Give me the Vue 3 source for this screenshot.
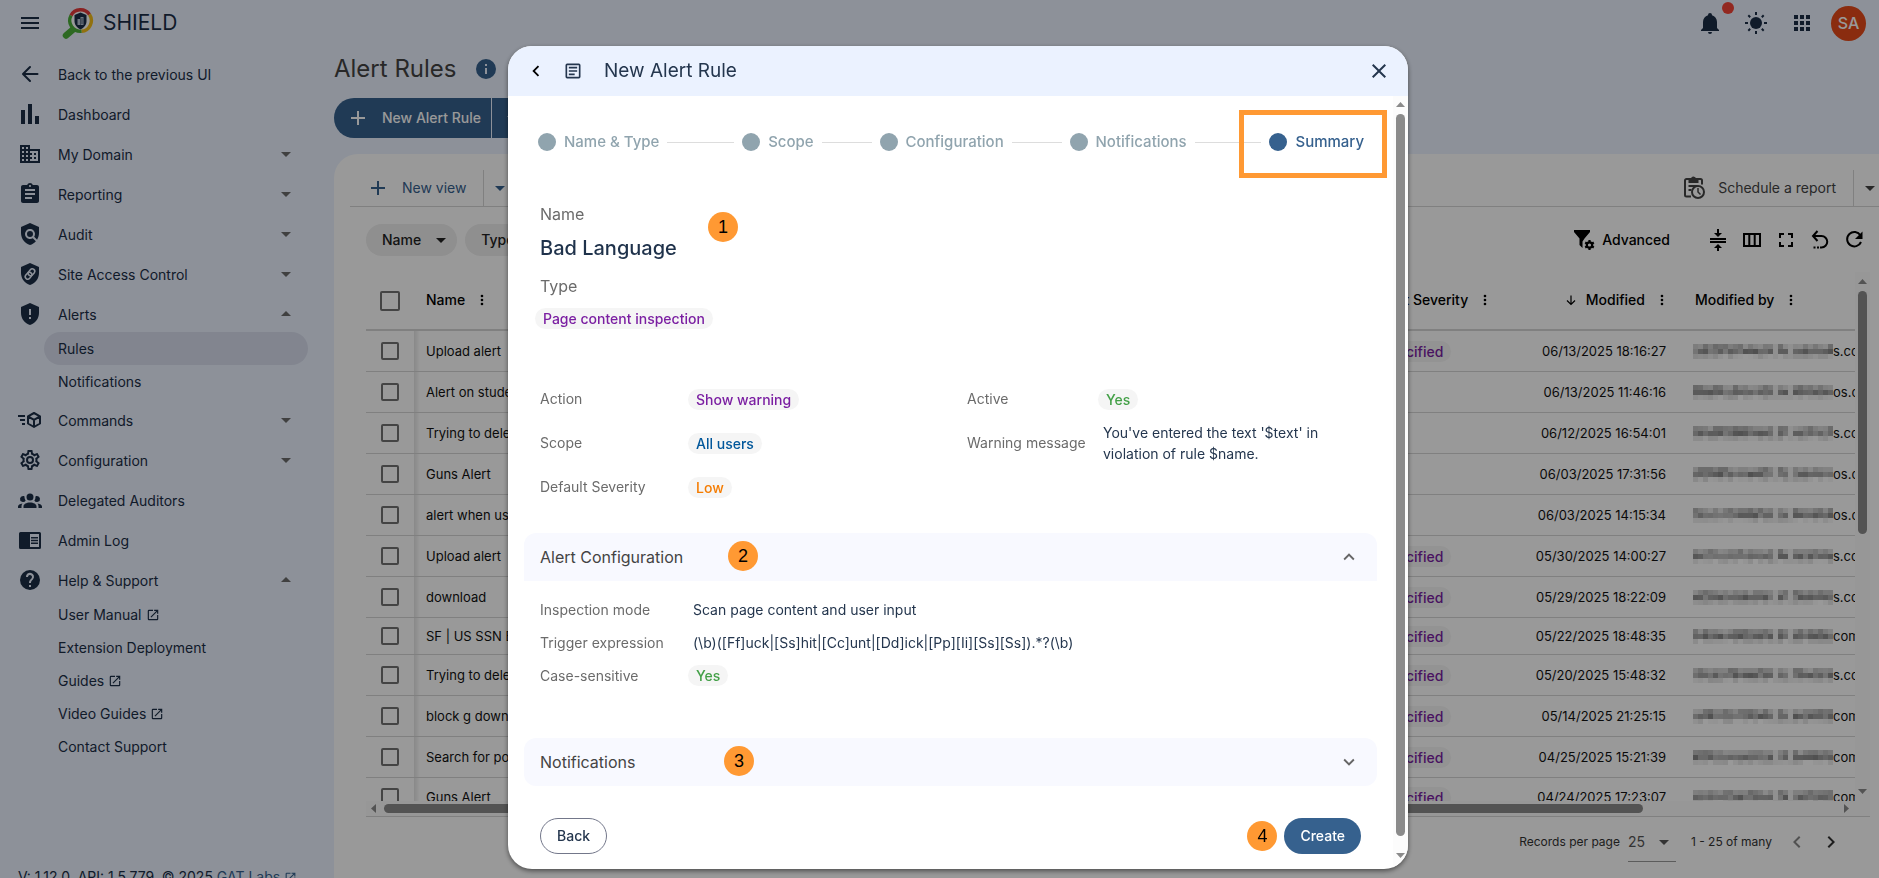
<script setup>
import { h } from 'vue'

const paths = {
  menu: 'M3 18h18v-2H3v2zm0-5h18v-2H3v2zm0-7v2h18V6H3z',
  chart: 'M3 8h4v14H3zM10 2h4v20h-4zM17 14h4v8h-4z',
  domain: 'M12 7V3H2v18h20V7H12zM6 19H4v-2h2v2zm0-4H4v-2h2v2zm0-4H4V9h2v2zm0-4H4V5h2v2zm4 12H8v-2h2v2zm0-4H8v-2h2v2zm0-4H8V9h2v2zm0-4H8V5h2v2zm10 12h-8v-2h2v-2h-2v-2h2v-2h-2V9h8v10zm-2-8h-2v2h2v-2zm0 4h-2v2h2v-2z',
  assignment: 'M19 3h-4.18C14.4 1.84 13.3 1 12 1c-1.3 0-2.4.84-2.82 2H5c-1.1 0-2 .9-2 2v14c0 1.1.9 2 2 2h14c1.1 0 2-.9 2-2V5c0-1.1-.9-2-2-2zm-7 0c.55 0 1 .45 1 1s-.45 1-1 1-1-.45-1-1 .45-1 1-1zm2 14H7v-2h7v2zm3-4H7v-2h10v2zm0-4H7V7h10v2z',
  policy: 'M21 5l-9-4-9 4v6c0 5.55 3.84 10.74 9 12 2.3-.56 4.33-1.9 5.88-3.71l-3.12-3.12c-1.94 1.29-4.58 1.07-6.29-.64-1.95-1.95-1.95-5.12 0-7.07 1.95-1.95 5.12-1.95 7.07 0 1.71 1.71 1.92 4.35.64 6.29l2.9 2.9C20.29 15.69 21 13.38 21 11V5zM12 9a3 3 0 1 0 0 6 3 3 0 0 0 0-6z',
  shieldAlert: 'M12 1L3 5v6c0 5.55 3.84 10.74 9 12 5.16-1.26 9-6.45 9-12V5l-9-4zm-1 6h2v6h-2V7zm0 8h2v2h-2v-2z',
  shield: 'M12 1L3 5v6c0 5.55 3.84 10.74 9 12 5.16-1.26 9-6.45 9-12V5l-9-4z',
  cog: 'M12 8a4 4 0 1 1 0 8 4 4 0 0 1 0-8m0 2a2 2 0 1 0 0 4 2 2 0 0 0 0-4m-2 12c-.25 0-.46-.18-.5-.42l-.37-2.65c-.63-.25-1.17-.59-1.69-.99l-2.49 1.01c-.22.08-.49 0-.61-.22l-2-3.46c-.13-.22-.07-.49.12-.64l2.11-1.66L4.5 12l.07-1-2.11-1.63c-.19-.15-.25-.42-.12-.64l2-3.46c.12-.22.39-.31.61-.22l2.49 1c.52-.39 1.06-.73 1.69-.98l.37-2.65c.04-.24.25-.42.5-.42h4c.25 0 .46.18.5.42l.37 2.65c.63.25 1.17.59 1.69.98l2.49-1c.22-.09.49 0 .61.22l2 3.46c.13.22.07.49-.12.64L19.43 11l.07 1-.07 1 2.11 1.63c.19.15.25.42.12.64l-2 3.46c-.12.22-.39.31-.61.22l-2.49-1c-.52.39-1.06.73-1.69.98l-.37 2.65c-.04.24-.25.42-.5.42h-4m1.25-18l-.37 2.61c-1.2.25-2.26.89-3.03 1.78L5.44 7.35l-.75 1.3L6.8 10.2a5.55 5.55 0 0 0 0 3.6l-2.12 1.56.75 1.3 2.43-1.04c.77.88 1.82 1.52 3.01 1.76l.37 2.62h1.52l.37-2.61c1.19-.25 2.24-.89 3.01-1.77l2.43 1.04.75-1.3-2.12-1.55c.4-1.17.4-2.44 0-3.61l2.11-1.55-.75-1.3-2.41 1.04a5.42 5.42 0 0 0-3.03-1.77L12.75 4h-1.5z',
  groups: 'M12 5.5A3.5 3.5 0 1 1 12 12.500 3.500 3.500 0 0 1 12 5.500M5 8c.56 0 1.080.15 1.530.420-.150 1.430.270 2.850 1.130 3.960A3 3 0 1 1 5 8m14 0a3 3 0 1 1-2.660 4.380 5.720 5.720 0 0 0 1.130-3.960c.450-.270.970-.420 1.530-.420M5.500 18.250c0-2.070 2.910-3.750 6.500-3.750s6.500 1.680 6.500 3.750V20h-13v-1.750M0 20v-1.500c0-1.390 1.890-2.560 4.450-2.900-.590.680-.950 1.620-.950 2.650V20H0m24 0h-3.500v-1.750c0-1.030-.360-1.970-.950-2.650 2.560.340 4.450 1.510 4.450 2.900V20z',
  reader: 'M2.500 4A1.500 1.500 0 0 0 1 5.500v14A1.500 1.500 0 0 0 2.500 21h19a1.500 1.500 0 0 0 1.500-1.500v-14A1.500 1.500 0 0 0 21.500 4h-19zM12 6h9v13h-9V6zm1 3h7v1.500h-7V9zm0 2.700h7v1.500h-7v-1.500zm0 2.700h7v1.500h-7v-1.500z',
  help: 'M12 2a10 10 0 1 0 0 20 10 10 0 0 0 0-20zm1 17h-2v-2h2v2zm2.070-7.750l-.900.920C13.450 12.900 13 13.500 13 15h-2v-.500c0-1.100.450-2.100 1.170-2.830l1.240-1.260A2 2 0 1 0 10 9H8a4 4 0 1 1 7.070 2.250z',
  open: 'M14 3v2h3.590L7.760 14.830l1.410 1.410L19 6.410V10h2V3m-2 16H5V5h7V3H5a2 2 0 0 0-2 2v14a2 2 0 0 0 2 2h14a2 2 0 0 0 2-2v-7h-2v7z',
  bell: 'M21 19v1H3v-1l2-2v-6c0-3.100 2.030-5.830 5-6.710V4a2 2 0 1 1 4 0v.290c2.970.880 5 3.610 5 6.710v6l2 2m-7 2a2 2 0 1 1-4 0',
  apps: 'M4 4h4v4H4zM10 4h4v4h-4zM16 4h4v4h-4zM4 10h4v4H4zM10 10h4v4h-4zM16 10h4v4h-4zM4 16h4v4H4zM10 16h4v4h-4zM16 16h4v4h-4z',
  down: 'M7 10l5 5 5-5z',
  up: 'M7 14l5-5 5 5z',
  plus: 'M19 13h-6v6h-2v-6H5v-2h6V5h2v6h6v2z',
  info: 'M12 2a10 10 0 1 0 0 20 10 10 0 0 0 0-20zm1 15h-2v-6h2v6zm0-8h-2V7h2v2z',
  dots: 'M12 8a2 2 0 1 0 0-4 2 2 0 0 0 0 4zm0 2a2 2 0 1 0 0 4 2 2 0 0 0 0-4zm0 6a2 2 0 1 0 0 4 2 2 0 0 0 0-4z',
  compress: 'M4 10h16v2H4zM4 13h16v2H4zM11 1h2v4h3l-4 4-4-4h3zM12 16l4 4h-3v3h-2v-3H8z',
  columns: 'M3 5v14h18V5H3zm5.300 12H5V7h3.300v10zm5.400 0h-3.400V7h3.400v10zm5.300 0h-3.300V7H19v10z',
  fullscreen: 'M5 5h5v2H7v3H5V5zm9 0h5v5h-2V7h-3V5zM5 14h2v3h3v2H5v-5zm12 0h2v5h-5v-2h3v-3z',
  chevLeft: 'M15.410 7.410L14 6l-6 6 6 6 1.410-1.410L10.830 12z',
  chevRight: 'M10 6L8.590 7.410 13.170 12l-4.580 4.590L10 18l6-6z',
  expandMore: 'M16.590 8.590L12 13.170 7.410 8.590 6 10l6 6 6-6z',
  expandLess: 'M12 8l-6 6 1.410 1.410L12 10.830l4.590 4.580L18 14z',
  article: 'M5 3a2 2 0 0 0-2 2v14a2 2 0 0 0 2 2h14a2 2 0 0 0 2-2V5a2 2 0 0 0-2-2H5zm0 2h14v14H5V5zm2 2v2h10V7H7zm0 4v2h10v-2H7zm0 4v2h7v-2H7z',
  close: 'M19 6.410L17.590 5 12 10.590 6.410 5 5 6.410 10.590 12 5 17.590 6.410 19 12 13.410 17.590 19 19 17.590 13.410 12z'
}

const Icon = (props) =>
  h('svg', { viewBox: '0 0 24 24', width: props.size || 24, height: props.size || 24, 'aria-hidden': 'true' }, [
    h('path', { d: paths[props.name], fill: 'currentColor', 'fill-rule': 'evenodd' })
  ])
Icon.props = ['name', 'size']

const nav = [
  { label: 'Back to the previous UI', icon: 'back' },
  { label: 'Dashboard', icon: 'chart' },
  { label: 'My Domain', icon: 'domain', arrow: 'down' },
  { label: 'Reporting', icon: 'assignment', arrow: 'down' },
  { label: 'Audit', icon: 'policy', arrow: 'down' },
  { label: 'Site Access Control', icon: 'link', arrow: 'down' },
  { label: 'Alerts', icon: 'shieldAlert', arrow: 'up', children: [{ label: 'Rules', active: true }, { label: 'Notifications' }] },
  { label: 'Commands', icon: 'commands', arrow: 'down' },
  { label: 'Configuration', icon: 'cog', arrow: 'down' },
  { label: 'Delegated Auditors', icon: 'groups' },
  { label: 'Admin Log', icon: 'reader' },
  {
    label: 'Help & Support', icon: 'help', arrow: 'up',
    children: [
      { label: 'User Manual', ext: true },
      { label: 'Extension Deployment' },
      { label: 'Guides', ext: true },
      { label: 'Video Guides', ext: true },
      { label: 'Contact Support' }
    ]
  }
]

const rows = [
  { name: 'Upload alert', sev: true, date: '06/13/2025 18:16:27', tail: 's.com' },
  { name: 'Alert on student', date: '06/13/2025 11:46:16', tail: 'os.com' },
  { name: 'Trying to delete', date: '06/12/2025 16:54:01', tail: 's.com' },
  { name: 'Guns Alert', date: '06/03/2025 17:31:56', tail: 'os.com' },
  { name: 'alert when user', date: '06/03/2025 14:15:34', tail: 'os.com' },
  { name: 'Upload alert', sev: true, date: '05/30/2025 14:00:27', tail: 's.com' },
  { name: 'download', sev: true, date: '05/29/2025 18:22:09', tail: 's.com' },
  { name: 'SF | US SSN Block', sev: true, date: '05/22/2025 18:48:35', tail: 'com', small: true },
  { name: 'Trying to delete', sev: true, date: '05/20/2025 15:48:32', tail: 's.com' },
  { name: 'block g download', sev: true, date: '05/14/2025 21:25:15', tail: 'com' },
  { name: 'Search for policy', sev: true, date: '04/25/2025 15:21:39', tail: 'com' },
  { name: 'Guns Alert', sev: true, date: '04/24/2025 17:23:07', tail: 'com', last: true }
]

/* Redacted addresses: a 28 x 3 grid of grey cells, darkest in the middle line. */
const mosaic = (seed) => {
  const cells = []
  let s = seed * 7919 + 17
  for (let y = 0; y < 3; y++) {
    for (let x = 0; x < 28; x++) {
      s = (s * 16807) % 2147483647
      const r = (s % 1000) / 1000
      const gap = x === 16 || x === 19
      const o = gap ? 0.06 : [0.1 + r * 0.22, 0.22 + r * 0.26, r * 0.12][y]
      cells.push({ x: x * 5, y: y * 5, o: o.toFixed(2) })
    }
  }
  return cells
}
rows.forEach((r, i) => { r.cells = mosaic(i + 1) })

const steps = [
  { label: 'Name & Type', grow: 67 },
  { label: 'Scope', grow: 50 },
  { label: 'Configuration', grow: 50 },
  { label: 'Notifications', grow: 67 },
  { label: 'Summary', active: true }
]
</script>

<template>
  <div class="app">
    <header class="top">
      <button class="icon-btn" aria-label="Menu"><Icon name="menu" /></button>
      <svg class="logo" viewBox="0 0 32 32" aria-hidden="true">
        <path d="M11 22.500L4 28.500" stroke="#4caf3a" stroke-width="6.500" stroke-linecap="round" />
        <circle cx="18.500" cy="13.500" r="11" fill="#fff" />
        <path d="M9 8.500A10.800 10.800 0 0 1 27.500 7.500" fill="none" stroke="#e5393a" stroke-width="3.400" />
        <path d="M27.500 7.500A10.800 10.800 0 0 1 19.500 24.300" fill="none" stroke="#f2bd1a" stroke-width="3.400" />
        <path d="M19.500 24.300A10.800 10.800 0 0 1 9 8.500" fill="none" stroke="#4caf3a" stroke-width="3.400" />
        <path d="M18.500 5.500l6 2.500v6c0 4-2.500 6.500-6 8.500-3.500-2-6-4.500-6-8.500V8z" fill="#1b2e47" />
        <path d="M15.500 12h2.500v6h-2.500zM18.500 10h3v8h-3z" fill="#b9c4d4" />
        <path d="M19.300 12h1.400M19.300 14h1.400M19.300 16h1.400" stroke="#1b2e47" />
      </svg>
      <span class="brand">SHIELD</span>
      <div class="top-right">
        <button class="icon-btn bell" aria-label="Notifications"><Icon name="bell" /><i class="dot"></i></button>
        <button class="icon-btn" aria-label="Theme">
          <svg viewBox="0 0 24 24" width="24" height="24" aria-hidden="true">
            <circle cx="12" cy="12" r="6" fill="currentColor" />
            <path d="M12 1v3M12 20v3M1 12h3M20 12h3M4.300 4.300l1.900 1.900M17.800 17.800l1.900 1.900M4.300 19.700l1.900-1.900M17.800 6.200l1.900-1.900" stroke="currentColor" stroke-width="2" />
          </svg>
        </button>
        <button class="icon-btn" aria-label="Apps"><Icon name="apps" /></button>
        <button class="avatar">SA</button>
      </div>
    </header>

    <div class="body">
      <aside class="side">
        <nav class="nav">
          <div v-for="item in nav" :key="item.label">
            <a href="#" class="nav-item">
              <svg v-if="item.icon === 'back'" viewBox="0 0 24 24" width="24" height="24" aria-hidden="true">
                <path d="M19.500 12H5.500M12 5l-7 7 7 7" fill="none" stroke="currentColor" stroke-width="2" stroke-linecap="round" stroke-linejoin="round" />
              </svg>
              <svg v-else-if="item.icon === 'link'" viewBox="0 0 24 24" width="24" height="24" aria-hidden="true">
                <path :d="paths.shield" fill="currentColor" />
                <g fill="none" stroke="#ebf2ff" stroke-width="1.500" transform="rotate(-50 12 12)">
                  <rect x="6" y="9.500" width="7.500" height="5" rx="2.500" />
                  <rect x="10.500" y="9.500" width="7.500" height="5" rx="2.500" />
                </g>
              </svg>
              <svg v-else-if="item.icon === 'commands'" viewBox="0 0 24 24" width="24" height="24" aria-hidden="true">
                <path d="M0 8h7M2 12h5M4 16h3" stroke="currentColor" stroke-width="1.800" />
                <path d="M16 5l6 3.300v7.200L16 19l-6-3.500V8.300zM10 8.300l6 3.500 6-3.500M16 11.800V19" fill="none" stroke="currentColor" stroke-width="2" stroke-linejoin="round" />
              </svg>
              <Icon v-else :name="item.icon" />
              <span class="nav-label">{{ item.label }}</span>
              <Icon v-if="item.arrow" class="nav-arrow" :name="item.arrow" />
            </a>
            <a v-for="c in item.children" :key="c.label" href="#" class="sub" :class="{ active: c.active }">
              {{ c.label }}<Icon v-if="c.ext" name="open" :size="14" />
            </a>
          </div>
        </nav>
        <p class="version">V: 1.12.0, API: 1.5.779, © 2025 <a href="#">GAT Labs <Icon name="open" :size="13" /></a></p>
      </aside>

      <main class="main">
        <div class="title-row">
          <h1>Alert Rules</h1>
          <Icon class="blue" name="info" />
        </div>
        <div class="split">
          <button class="split-main"><Icon name="plus" /><span>New Alert Rule</span></button>
          <button class="split-drop" aria-label="More"><Icon name="down" /></button>
        </div>

        <section class="card">
          <div class="views">
            <button class="view-btn blue"><Icon name="plus" /><span>New view</span></button>
            <button class="view-drop blue" aria-label="Views"><Icon name="down" /></button>
            <button class="report">
              <svg viewBox="0 0 24 24" width="24" height="24" aria-hidden="true">
                <path d="M9 20.500H4.500A1.500 1.500 0 0 1 3 19V4.500A1.500 1.500 0 0 1 4.500 3h14A1.500 1.500 0 0 1 20 4.500V8.500M6.500 10h9M6.500 14h3" fill="none" stroke="currentColor" stroke-width="2" />
                <path d="M6.500 3H9a2.500 2.500 0 0 1 5 0h2.500v4h-10z" fill="currentColor" />
                <circle cx="16" cy="16" r="6" fill="none" stroke="currentColor" stroke-width="2" />
                <path d="M16 12v4l2.500 2.500" fill="none" stroke="currentColor" stroke-width="1.500" />
              </svg>
              <span>Schedule a report</span>
            </button>
            <button class="report-drop" aria-label="Report options"><Icon name="down" /></button>
          </div>

          <div class="filters">
            <button class="filter">Name <Icon name="down" /></button>
            <button class="filter">Type <Icon name="down" /></button>
            <div class="tools">
              <button class="adv">
                <svg viewBox="0 0 24 24" width="24" height="24" aria-hidden="true">
                  <path d="M2 2h16v2l-5.500 6.500-2 3V20L7.500 17v-6.500L2 4z" fill="currentColor" />
                  <circle cx="17.500" cy="17" r="2.700" fill="none" stroke="currentColor" stroke-width="2.200" />
                  <path d="M17.500 12v2M17.500 20v2M13.200 14.500l1.700 1M20.100 18.500l1.700 1M13.200 19.500l1.700-1M20.100 15.500l1.700-1" stroke="currentColor" stroke-width="2.200" />
                </svg>
                <span>Advanced</span>
              </button>
              <button class="tool" aria-label="Density"><Icon name="compress" /></button>
              <button class="tool" aria-label="Columns"><Icon name="columns" /></button>
              <button class="tool" aria-label="Fullscreen"><Icon name="fullscreen" /></button>
              <button class="tool" aria-label="Reset">
                <svg viewBox="0 0 24 24" width="24" height="24" aria-hidden="true">
                  <path d="M9.500 3L5 8l4.500 5M5 8h8.500a5.500 5.500 0 0 1 0 11.500H12" fill="none" stroke="currentColor" stroke-width="2" />
                  <path d="M5.500 18.500h2v2h-2zM9 18.500h2v2H9z" fill="currentColor" />
                </svg>
              </button>
              <button class="tool" aria-label="Refresh">
                <svg viewBox="0 0 24 24" width="24" height="24" aria-hidden="true">
                  <path d="M18.500 7.500A7.200 7.200 0 1 0 19 14" fill="none" stroke="currentColor" stroke-width="2" />
                  <path d="M20.500 3.500v7.500H13z" fill="currentColor" />
                </svg>
              </button>
            </div>
          </div>

          <div class="grid-box">
            <div class="grid-main">
              <div class="clip">
                <table>
                  <colgroup><col class="c-check" /><col /><col class="c-sev" /><col class="c-mod" /><col class="c-by" /></colgroup>
                  <thead>
                    <tr>
                      <th class="check"><input type="checkbox" class="big" aria-label="Select all" /></th>
                      <th class="name-cell"><span class="th">Name <Icon name="dots" :size="16" /></span></th>
                      <th class="sev"><span class="th">Default Severity <Icon name="dots" :size="16" /></span></th>
                      <th class="mod-h">
                        <span class="th end">
                          <svg viewBox="0 0 12 12" width="12" height="12" aria-hidden="true"><path d="M6 1.500v9M2 6.500l4 4 4-4" fill="none" stroke="currentColor" stroke-width="1.200" /></svg>
                          Modified <Icon name="dots" :size="16" />
                        </span>
                      </th>
                      <th class="by"><span class="th">Modified by <Icon name="dots" :size="16" /></span></th>
                    </tr>
                  </thead>
                  <tbody>
                    <tr v-for="(r, i) in rows" :key="i" :class="{ small: r.small, last: r.last }">
                      <td class="check"><input type="checkbox" :aria-label="'Select ' + r.name" /></td>
                      <td class="name-cell">{{ r.name }}</td>
                      <td class="sev"><span v-if="r.sev" class="chip purple">Not specified</span></td>
                      <td class="date">{{ r.date }}</td>
                      <td class="by">
                        <span class="mail">
                          <svg viewBox="0 0 140 15" width="140" height="15" aria-hidden="true" shape-rendering="crispEdges">
                            <rect v-for="(c, k) in r.cells" :key="k" :x="c.x" :y="c.y" width="5" height="5" :opacity="c.o" />
                          </svg>{{ r.tail }}
                        </span>
                      </td>
                    </tr>
                  </tbody>
                </table>
              </div>
              <div class="hbar">
                <svg viewBox="0 0 5 9" width="5" height="9" aria-hidden="true"><path d="M5 0v9L0 4.500z" fill="#8b8b8b" /></svg>
                <div class="htrack"><div class="hthumb"></div></div>
                <svg viewBox="0 0 5 9" width="5" height="9" aria-hidden="true"><path d="M0 0v9l5-4.500z" fill="#8b8b8b" /></svg>
              </div>
            </div>
            <div class="vbar">
              <svg viewBox="0 0 9 5" width="9" height="5" aria-hidden="true"><path d="M0 5h9L4.500 0z" fill="#8b8b8b" /></svg>
              <div class="vtrack"><div class="vthumb"></div></div>
              <svg viewBox="0 0 9 5" width="9" height="5" aria-hidden="true"><path d="M0 0h9L4.500 5z" fill="#8b8b8b" /></svg>
            </div>
          </div>

          <footer class="pager">
            <label for="page-size">Records per page</label>
            <span class="size">
              <select id="page-size"><option>25</option></select>
              <Icon name="down" />
            </span>
            <span class="range">1 - 25 of many</span>
            <button class="tool muted" aria-label="Previous page"><Icon name="chevLeft" /></button>
            <button class="tool" aria-label="Next page"><Icon name="chevRight" /></button>
          </footer>
        </section>
      </main>
    </div>

    <div class="overlay">
      <section class="dialog" role="dialog" aria-label="New Alert Rule">
        <header class="d-head">
          <button class="icon-btn black" aria-label="Back"><Icon name="chevLeft" :size="22" /></button>
          <Icon name="article" :size="20" />
          <h2>New Alert Rule</h2>
          <button class="icon-btn close" aria-label="Close"><Icon name="close" /></button>
        </header>
        <div class="d-wrap">
          <div class="d-body">
            <ol class="stepper">
              <template v-for="s in steps" :key="s.label">
                <li class="step" :class="{ current: s.active }"><i></i>{{ s.label }}</li>
                <li v-if="s.grow" class="line" :style="{ flexGrow: s.grow }" aria-hidden="true"></li>
              </template>
            </ol>
            <div class="highlight"></div>
            <b class="badge b1">1</b>

            <div class="intro">
              <div class="cap">Name</div>
              <div class="big-name">Bad Language</div>
              <div class="cap type-cap">Type</div>
              <span class="chip purple pull">Page content inspection</span>
            </div>

            <dl class="facts">
              <dt>Action</dt><dd><span class="chip purple">Show warning</span></dd>
              <dt>Active</dt><dd><span class="chip green">Yes</span></dd>
              <dt>Scope</dt><dd><span class="chip azure">All users</span></dd>
              <dt>Warning message</dt><dd class="plain">You've entered the text '$text' in violation of rule $name.</dd>
              <dt>Default Severity</dt><dd><span class="chip orange">Low</span></dd>
            </dl>

            <button class="panel open">
              <span>Alert Configuration</span><Icon name="expandLess" :size="22" />
              <b class="badge b2">2</b>
            </button>
            <dl class="facts conf">
              <dt>Inspection mode</dt><dd class="plain">Scan page content and user input</dd>
              <dt>Trigger expression</dt><dd class="plain">(\b)([Ff]uck|[Ss]hit|[Cc]unt|[Dd]ick|[Pp][Ii][Ss][Ss]).*?(\b)</dd>
              <dt>Case-sensitive</dt><dd><span class="chip green">Yes</span></dd>
            </dl>
            <button class="panel">
              <span>Notifications</span><Icon name="expandMore" :size="22" />
              <b class="badge b3">3</b>
            </button>

            <div class="actions">
              <button class="btn ghost">Back</button>
              <b class="badge b4">4</b>
              <button class="btn solid">Create</button>
            </div>
          </div>
          <div class="vbar dialog-bar">
            <svg viewBox="0 0 9 5" width="9" height="5" aria-hidden="true"><path d="M0 5h9L4.500 0z" fill="#8b8b8b" /></svg>
            <div class="vtrack"><div class="vthumb"></div></div>
            <svg viewBox="0 0 9 5" width="9" height="5" aria-hidden="true"><path d="M0 0h9L4.500 5z" fill="#8b8b8b" /></svg>
          </div>
        </div>
      </section>
    </div>
  </div>
</template>

<style>
html, body { margin: 0; overflow: hidden; }
</style>

<style scoped>
.app {
  height: 100vh;
  display: flex;
  flex-direction: column;
  overflow: hidden;
  background: #ebf2ff;
  color: #1b2e47;
  font: 14px/20px Inter, "Liberation Sans", sans-serif;
}
.app * { box-sizing: border-box; }
.app :deep(svg) { display: block; flex: none; }
button { font: inherit; color: inherit; background: none; border: 0; padding: 0; display: flex; align-items: center; }
a { color: inherit; text-decoration: none; }
h1, h2, p, dl, dd, ol { margin: 0; padding: 0; font-weight: 400; }
.blue { color: #36618e; }

.top { flex: none; height: 46px; display: flex; align-items: center; padding: 0 13px 0 18px; }
.logo { width: 32px; height: 32px; margin-left: 20px; }
.brand { margin-left: 9px; font-size: 21px; }
.top-right { margin-left: auto; display: flex; align-items: center; gap: 22px; }
.bell { position: relative; }
.dot { position: absolute; left: 24px; top: -9px; width: 12px; height: 12px; border-radius: 50%; background: #f44336; }
.avatar { width: 35px; height: 35px; margin-left: -5px; border-radius: 50%; background: #e64a19; color: #fff; font-size: 16px; font-weight: 500; justify-content: center; }

.body { flex: 1; min-height: 0; display: flex; }
.side { flex: none; width: 334px; min-height: calc(100% + 9px); display: flex; flex-direction: column; padding: 10px 26px 0 18px; }
.nav { display: flex; flex-direction: column; gap: 4px; }
.nav-item { display: flex; align-items: center; height: 36px; padding-right: 10px; }
.nav-label { margin-left: 16px; padding-top: 2px; }
.nav-arrow { margin-left: auto; color: #6b6b6b; }
.sub { display: flex; align-items: center; gap: 4px; height: 33px; margin-left: 26px; padding-left: 14px; border-radius: 17px; }
.sub.active { background: #d9deef; }
.version { margin-top: auto; white-space: nowrap; }
.version a { display: inline-flex; align-items: center; gap: 4px; color: #36618e; }

.main { flex: 1; min-width: 0; display: flex; flex-direction: column; }
.title-row { height: 46px; display: flex; align-items: center; gap: 18px; }
h1 { font-size: 24px; line-height: 32px; color: #444; }
.split { display: flex; height: 40px; margin: 6px 0 16px; color: #fff; }
.split-main { background: #36618e; border-radius: 20px 0 0 20px; padding: 0 10px 0 12px; gap: 12px; font-weight: 500; }
.split-drop { background: #36618e; border-radius: 0 20px 20px 0; padding: 0 8px; margin-left: 1px; }

.card { flex: 1; min-height: 0; display: flex; flex-direction: column; background: #fff; border-radius: 24px 0 0 0; }
.views { flex: none; display: flex; height: 53px; margin-left: 16px; padding: 16px 0 0 16px; border-bottom: 1px solid #d6d6d6; }
.view-btn { gap: 12px; padding-right: 17px; border-right: 1px solid #d6d6d6; }
.view-drop { padding: 0 4px; }
.report { margin-left: auto; gap: 12px; padding-right: 17px; border-right: 1px solid #d6d6d6; color: #444; }
.report-drop { padding-left: 4px; margin-right: -3px; color: #444; }
.filters { flex: none; height: 65px; display: flex; align-items: center; gap: 8px; padding: 0 13px 0 32px; color: #000; }
.filter { height: 32px; padding: 0 4px 0 16px; gap: 8px; border-radius: 16px; background: #eee; color: #222; font-weight: 500; }
.tools { margin-left: auto; display: flex; align-items: center; gap: 10px; }
.adv { gap: 6px; margin-right: 26px; font-weight: 500; }

.grid-box { flex: 1; min-height: 0; display: flex; margin: 0 9px 0 32px; border-bottom: 1px solid #d6d6d6; }
.grid-main { flex: 1; min-width: 0; display: flex; flex-direction: column; }
.clip { flex: 1; min-height: 0; overflow: hidden; }
table { width: 100%; table-layout: fixed; border-collapse: separate; border-spacing: 0; color: #111; font-size: 14px; }
.c-check { width: 48px; }
.c-sev { width: 165px; }
.c-mod { width: 174px; }
.c-by { width: 175px; }
th { height: 59px; padding: 0 16px 2px; border-bottom: 2px solid #d6d6d6; text-align: left; font-weight: 500; color: #000; white-space: nowrap; }
.th { display: flex; align-items: center; gap: 9px; }
.end { justify-content: flex-end; }
th.sev { padding-left: 20px; padding-right: 0; }
td.sev { padding-left: 5px; }
th.mod-h { padding-right: 10px; }
td { height: 41px; padding: 0 16px; border-bottom: 1px solid #d6d6d6; white-space: nowrap; overflow: hidden; }
.small td { height: 37px; }
.last td { height: 39px; }
td.date { text-align: right; padding-right: 14px; font-size: 13px; }
th.name-cell { padding-left: 12px; }
td.name-cell { padding-left: 12px; font-size: 13px; background: linear-gradient(to right, #e4e4e4, #fff 6px); }
th.by { padding: 0 0 2px 15px; }
td.by { padding: 0 0 0 13px; font-size: 13px; }
.mail { display: flex; align-items: center; overflow: hidden; }
th.check, td.check { padding: 0 0 0 15px; }
input[type="checkbox"] { appearance: none; display: block; width: 18px; height: 18px; margin: 0; border: 2px solid #727272; border-radius: 2px; background: #fff; }
input.big { width: 20px; height: 20px; margin-left: -1px; }

.hbar { flex: none; height: 15px; display: flex; align-items: center; gap: 8px; padding: 0 6px 0 5px; background: #fcfcfc; }
.htrack { flex: 1; }
.hthumb { width: 86.7%; height: 9px; border-radius: 5px; background: #8b8b8b; }
.vbar { flex: none; width: 15px; display: flex; flex-direction: column; align-items: center; gap: 7px; padding: 7px 0 22px; background: #fcfcfc; }
.vtrack { flex: 1; width: 9px; }
.vthumb { width: 9px; height: 49.4%; border-radius: 5px; background: #8b8b8b; }

.pager { flex: none; height: 61px; display: flex; align-items: flex-start; justify-content: flex-end; padding: 13px 36px 0 0; color: #333; font-size: 12px; line-height: 24px; }
.size { display: flex; align-items: center; width: 48px; height: 32px; margin: 0 15px 0 8px; padding-bottom: 8px; border-bottom: 1px solid #999; color: #555; }
select { appearance: none; width: 24px; border: 0; padding: 0; background: none; color: inherit; font: 14px/24px Inter, "Liberation Sans", sans-serif; }
.range { margin-right: 13px; }
.pager .tool + .tool { margin-left: 10px; }
.muted { color: #888; }

.overlay { position: fixed; inset: 0; display: flex; justify-content: center; padding: 46px 0 9px 37px; background: rgba(0, 0, 0, .4); }
.dialog { width: 900px; display: flex; flex-direction: column; overflow: hidden; border-radius: 24px; background: #fff; box-shadow: 0 2px 5px rgba(0, 0, 0, .5); }
.d-head { flex: none; height: 50px; display: flex; align-items: center; padding: 0 17px; background: #ebf2ff; color: #24364e; }
.black { color: #000; margin-right: 16px; }
h2 { margin-left: 21px; font-size: 19px; line-height: 28px; }
.close { margin-left: auto; }
.d-wrap { flex: 1; min-height: 0; display: flex; }
.d-body { flex: 1; min-width: 0; position: relative; overflow: hidden; }
.dialog-bar { padding: 6px 0 11px; }
.dialog-bar .vthumb { height: 98.7%; }

.stepper { list-style: none; height: 92px; display: flex; align-items: center; gap: 8px; padding: 0 29px 0 30px; color: #90a4ae; font-size: 15px; font-weight: 500; }
.step { display: flex; align-items: center; gap: 8px; }
.step i { width: 18px; height: 18px; border-radius: 50%; background: currentColor; }
.current { color: #36618e; }
.line { flex-basis: 0; height: 1px; background: #ddd; }
.highlight { position: absolute; top: 14px; right: 6px; width: 148px; height: 68px; border: 5px solid #ff9933; }
.badge { width: 30px; height: 30px; border-radius: 50%; background: #ff9933; color: #000; font: 18px/30px "Liberation Sans", sans-serif; text-align: center; }
.b1, .b2, .b3 { position: absolute; }
.b1 { left: 200px; top: 116px; }
.b2 { left: 204px; top: 8px; }
.b3 { left: 200px; top: 8px; }

.intro { padding: 14px 32px 0; }
.cap { font-size: 16px; line-height: 24px; color: #6b6b6b; }
.big-name { margin: 8px 0 12px; font-size: 20px; line-height: 28px; font-weight: 500; color: #1f324b; }
.type-cap { margin-bottom: 10px; }
.chip { display: inline-block; vertical-align: top; height: 21px; padding: 0 8px; border-radius: 11px; background: #f5f5f5; font-size: 14px; line-height: 21px; font-weight: 500; }
.pull { margin-left: -5px; }
td .chip { vertical-align: middle; }
.purple { color: #7b1fa2; }
.green { color: #43a047; }
.azure { color: #01579b; }
.orange { color: #f57c00; }

.facts { display: grid; grid-template-columns: 148px 279px 131px 1fr; grid-auto-rows: 44px; align-items: center; padding: 48px 32px 24px; }
dt { color: #6b6b6b; }
.plain { padding-left: 5px; line-height: 21px; color: #24364e; }
.conf { grid-template-columns: 148px 1fr; grid-auto-rows: 33px; padding: 12px 32px 46px; }
.panel { position: relative; width: calc(100% - 32px); height: 48px; margin: 0 16px; padding: 0 17px 0 16px; justify-content: space-between; border-radius: 12px; background: #f8f9ff; color: #444; font-size: 16px; }
.panel > svg { color: #666; }
.panel.open { border-radius: 12px 12px 0 0; }
.actions { display: flex; align-items: center; padding: 32px 32px 0; }
.btn { height: 36px; border-radius: 18px; padding: 0 16px; font-weight: 500; }
.ghost { border: 1px solid #73778a; color: #24364e; }
.solid { background: #36618e; color: #fff; }
.b4 { margin: 0 7px 0 auto; }
</style>
